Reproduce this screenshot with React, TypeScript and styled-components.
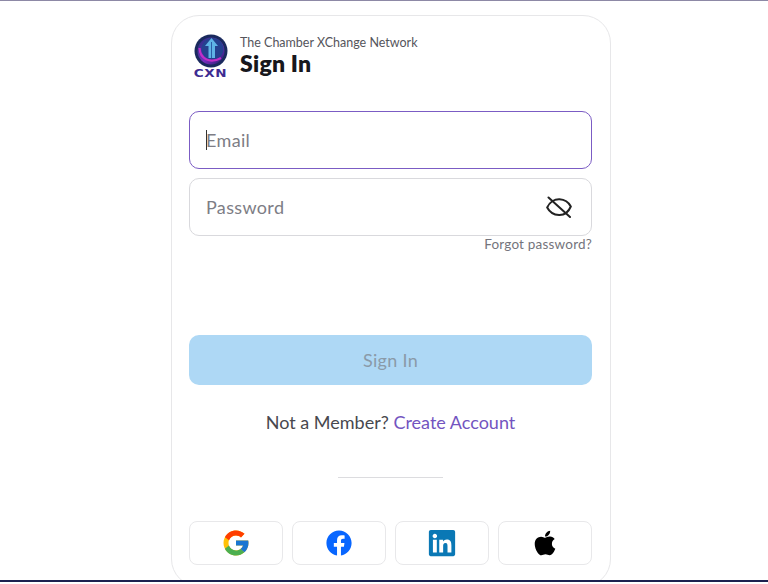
import React from "react";
import styled, { createGlobalStyle } from "styled-components";
import { FaFacebook, FaApple, FaLinkedin } from "react-icons/fa";
import { FcGoogle } from "react-icons/fc";

const Global = createGlobalStyle`
  html, body { margin: 0; padding: 0; background: #fff; }
  * { box-sizing: border-box; }
  body { font-family: "Lato", "Liberation Sans", sans-serif; }
`;

const Screen = styled.div`
  width: 768px;
  height: 584px;
  overflow: hidden;
  background: #fff;
`;

const Viewport = styled.main`
  width: 768px;
  height: 582px;
  overflow: hidden;
  display: flex;
  justify-content: center;
  align-items: flex-start;
  padding-top: 14px;
  border-top: 1px solid #8d89a6;
  border-bottom: 2px solid #1d2150;
`;

const Card = styled.section`
  width: 440px;
  height: 572px;
  margin-left: 14px;
  flex: none;
  border: 1px solid #e7e7e9;
  border-radius: 28px;
  padding: 18px 18px 0 17px;
  display: flex;
  flex-direction: column;
`;

const Header = styled.header`
  display: flex;
  align-items: flex-start;
  gap: 12px;
  height: 44px;
  padding-left: 4px;
`;

const LogoWrap = styled.div`
  width: 35px;
  display: flex;
  flex-direction: column;
  align-items: center;
`;

const LogoMark = styled.span`
  font-family: "DejaVu Sans", sans-serif;
  font-size: 10px;
  line-height: 9px;
  font-weight: 700;
  letter-spacing: 0.5px;
  margin-top: 1px;
  color: #3e2c92;
  transform: scaleX(1.35);
`;

const TitleBlock = styled.div`
  display: flex;
  flex-direction: column;
  padding-top: 1px;
`;

const Network = styled.span`
  font-size: 12.5px;
  line-height: 16px;
  color: #55555c;
`;

const Title = styled.h1`
  margin: -1px 0 0;
  font-size: 23px;
  line-height: 26px;
  font-weight: 800;
  color: #17171c;
  letter-spacing: 0.25px;
`;

const Field = styled.div<{ $focused?: boolean }>`
  height: 58px;
  border: 1px solid ${(p) => (p.$focused ? "#7b5cc4" : "#d9d9dd")};
  border-radius: 10px;
  display: flex;
  align-items: center;
  justify-content: space-between;
  padding: 0 19px 0 16px;
  font-size: 18px;
  letter-spacing: 0.35px;
  color: #7d7d85;
`;

const EmailField = styled(Field)`
  margin-top: 33px;
`;

const PasswordField = styled(Field)`
  margin-top: 9px;
`;

const Caret = styled.span`
  width: 1px;
  height: 20px;
  background: #333;
  margin-right: -1px;
`;

const Placeholder = styled.span`
  display: flex;
  align-items: center;
`;

const Forgot = styled.a`
  align-self: flex-end;
  font-size: 13.5px;
  letter-spacing: 0.2px;
  line-height: 16px;
  color: #74747c;
`;

const Submit = styled.button`
  margin-top: 83px;
  height: 50px;
  border: 0;
  border-radius: 10px;
  background: #aed8f5;
  color: #8a9aa8;
  font: inherit;
  font-size: 18px;
  letter-spacing: 0.3px;
`;

const Prompt = styled.p`
  margin: 26px 0 0;
  text-align: center;
  font-size: 18px;
  line-height: 22px;
  color: #48484e;
`;

const CreateLink = styled.a`
  color: #7354c0;
`;

const Divider = styled.hr`
  width: 105px;
  margin: 44px auto 0;
  border: 0;
  border-top: 1px solid #dcdcdf;
`;

const Socials = styled.div`
  margin-top: 43px;
  display: grid;
  grid-template-columns: repeat(4, 94px);
  justify-content: space-between;
`;

const SocialButton = styled.button`
  height: 44px;
  border: 1px solid #e8e8ea;
  border-radius: 8px;
  background: #fff;
  padding: 0;
  display: flex;
  align-items: center;
  justify-content: center;
`;

const Logo = () => (
  <svg width="34" height="34" viewBox="0 0 34 34" aria-hidden="true">
    <defs>
      <linearGradient id="ring" x1="0" y1="0" x2="1" y2="1">
        <stop offset="0" stopColor="#1c2f7c" />
        <stop offset="0.55" stopColor="#7a2fc0" />
        <stop offset="1" stopColor="#1f1c6a" />
      </linearGradient>
    </defs>
    <circle cx="17" cy="17" r="16.5" fill="#1a2a5e" />
    <circle cx="17" cy="17" r="13.5" fill="url(#ring)" />
    <circle cx="18.5" cy="15" r="11" fill="#25418f" />
    <path d="M17.5 4 L24 12 H21 V24 H14.5 V12 H11 Z" fill="#5fb4e6" />
    <path d="M17.5 8 V24" stroke="#2c5ea8" strokeWidth="1" />
    <path d="M5.5 14 C6 25 16 30 27 24" fill="none" stroke="#c22fc8" strokeWidth="2.2" />
  </svg>
);

const EyeSlash = () => (
  <svg width="26" height="22" viewBox="0 0 26 22" fill="none" stroke="#222" strokeWidth="2" strokeLinecap="round" aria-hidden="true">
    <path d="M1.2 11.5 C3.5 6 8.5 3 13.5 3.2 C18 3.4 22.5 6 24.8 10.5 C22.5 16 18 19.2 13 19 C8 18.8 3.5 16 1.2 11.5 Z" />
    <path d="M2.5 1.5 L24 21" />
  </svg>
);

export default function App() {
  return (
    <Screen>
      <Global />
      <Viewport>
        <Card>
          <Header>
            <LogoWrap>
              <Logo />
              <LogoMark>CXN</LogoMark>
            </LogoWrap>
            <TitleBlock>
              <Network>The Chamber XChange Network</Network>
              <Title>Sign In</Title>
            </TitleBlock>
          </Header>
          <EmailField $focused>
            <Placeholder>
              <Caret />
              Email
            </Placeholder>
          </EmailField>
          <PasswordField>
            <span>Password</span>
            <EyeSlash />
          </PasswordField>
          <Forgot>Forgot password?</Forgot>
          <Submit>Sign In</Submit>
          <Prompt>
            Not a Member? <CreateLink>Create Account</CreateLink>
          </Prompt>
          <Divider />
          <Socials>
            <SocialButton aria-label="Google"><FcGoogle size={30} /></SocialButton>
            <SocialButton aria-label="Facebook"><FaFacebook size={26} color="#0866ff" /></SocialButton>
            <SocialButton aria-label="LinkedIn"><FaLinkedin size={30} color="#0a78b5" /></SocialButton>
            <SocialButton aria-label="Apple"><FaApple size={28} color="#000" /></SocialButton>
          </Socials>
        </Card>
      </Viewport>
    </Screen>
  );
}
